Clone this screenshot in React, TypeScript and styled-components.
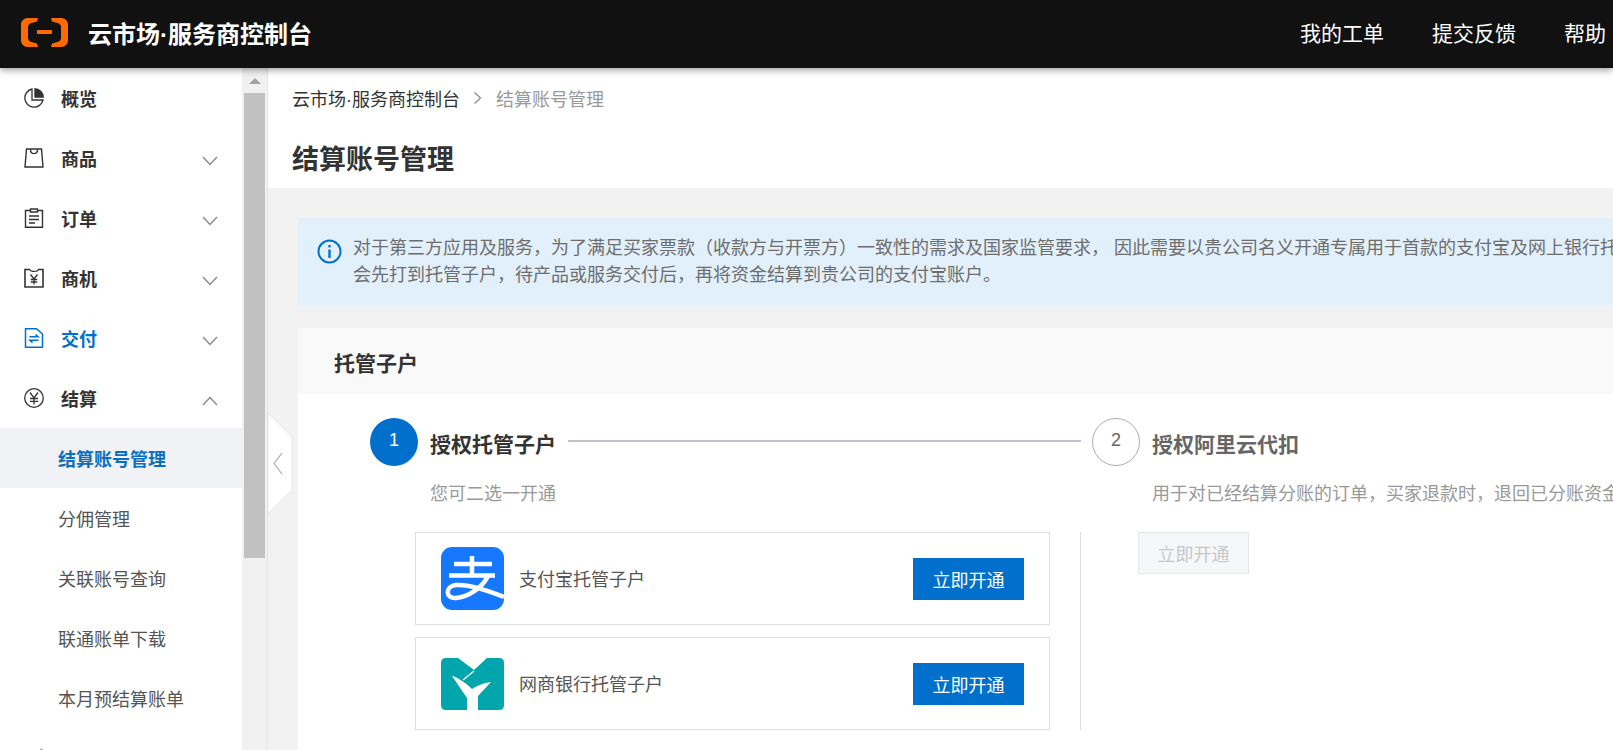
import React from "react";
import styled, { createGlobalStyle } from "styled-components";

const Global = createGlobalStyle`
  html, body { margin: 0; padding: 0; height: 100%; overflow: hidden; background: #fff; }
  * { box-sizing: border-box; }
  body { font-family: "Liberation Sans", "Noto Sans CJK SC", sans-serif; color: #333; }
`;

const Page = styled.div`
  display: flex;
  flex-direction: column;
  width: 100%;
  height: 100vh;
  overflow: hidden;
`;

const TopBar = styled.header`
  position: relative;
  z-index: 2;
  flex: none;
  display: flex;
  align-items: center;
  height: 68px;
  padding: 0 7px 4px 21px;
  background: #111;
  box-shadow: 0 2px 7px rgba(0, 0, 0, 0.4);
  color: #fff;
`;

const BrandName = styled.div`
  margin-left: 20px;
  font-size: 24px;
  font-weight: 700;
  white-space: nowrap;
`;

const TopNav = styled.nav`
  margin-left: auto;
  display: flex;
  gap: 48px;
`;

const TopLink = styled.a`
  font-size: 21px;
  color: #fff;
  white-space: nowrap;
`;

const Body = styled.div`
  position: relative;
  flex: 1;
  display: flex;
  min-height: 0;
`;

const Sidebar = styled.aside`
  flex: none;
  width: 242px;
  height: 100%;
  overflow: hidden;
  background: #fff;
`;

const MenuRow = styled.div<{ $active?: boolean }>`
  display: flex;
  align-items: center;
  height: 60px;
  padding: 0 24px;
  font-size: 18px;
  font-weight: 700;
  color: ${(p) => (p.$active ? "#0070cc" : "#333")};
`;

const MenuIconBox = styled.span`
  flex: none;
  display: flex;
  align-items: center;
  justify-content: center;
  width: 20px;
  height: 20px;
  margin-right: 17px;
`;

const Chevron = styled.svg`
  flex: none;
  margin-left: auto;
  margin-top: 5px;
`;

const SubRow = styled.div<{ $active?: boolean }>`
  display: flex;
  align-items: center;
  height: 60px;
  padding: 0 0 1px 58px;
  font-size: 18px;
  font-weight: ${(p) => (p.$active ? 700 : 400)};
  color: ${(p) => (p.$active ? "#0a6fc2" : "#555")};
  background: ${(p) => (p.$active ? "#f0f2f5" : "transparent")};
`;

const ScrollTrack = styled.div`
  flex: none;
  display: flex;
  flex-direction: column;
  align-items: center;
  width: 25px;
  height: 100%;
  background: #f1f1f1;
`;

const ScrollArrow = styled.div`
  width: 0;
  height: 0;
  margin: 10px 0 9px;
  border-left: 6px solid transparent;
  border-right: 6px solid transparent;
  border-bottom: 6px solid #a3a3a3;
`;

const ScrollThumb = styled.div`
  width: 21px;
  height: 465px;
  background: #c1c1c1;
`;

const Main = styled.main`
  position: relative;
  flex: 1;
  display: flex;
  flex-direction: column;
  min-width: 0;
  height: 100%;
  overflow: hidden;
  background: #f2f2f2;
  border-left: 1px solid #e4e4e4;
`;

const CollapseHandle = styled.svg`
  position: absolute;
  left: 0;
  top: 345px;
`;

const PageHead = styled.div`
  flex: none;
  height: 120px;
  padding: 0 24px;
  background: #fff;
`;

const Crumbs = styled.div`
  display: flex;
  align-items: center;
  height: 60px;
  font-size: 18px;
  color: #333;
`;

const CrumbSep = styled.svg`
  margin: 0 14px 0 13px;
`;

const CrumbCurrent = styled.span`
  color: #999;
`;

const PageTitle = styled.h1`
  margin: 0;
  font-size: 27px;
  line-height: 64px;
  font-weight: 700;
  color: #333;
`;

const Content = styled.div`
  flex: 1;
  display: flex;
  flex-direction: column;
  min-height: 0;
  padding: 30px 0 0 30px;
`;

const Notice = styled.div`
  flex: none;
  display: flex;
  height: 87px;
  padding: 17px 0 0 18px;
  background: #e2f0fc;
`;

const NoticeIcon = styled.svg`
  flex: none;
  margin: 4px 11px 0 1px;
`;

const NoticeText = styled.div`
  font-size: 18px;
  line-height: 27px;
  color: #6e6e6e;
  white-space: nowrap;
`;

const Card = styled.section`
  flex: 1;
  margin-top: 23px;
  background: #fff;
`;

const CardHead = styled.div`
  height: 66px;
  padding: 0 36px;
  background: #f9f9f9;
  font-size: 21px;
  line-height: 71px;
  font-weight: 700;
  color: #333;
`;

const Steps = styled.div`
  display: flex;
  padding: 24px 0 0 72px;
`;

const Step = styled.div<{ $width: number }>`
  flex: none;
  width: ${(p) => p.$width}px;
`;

const StepHead = styled.div`
  display: flex;
  align-items: flex-start;
  height: 48px;
`;

const StepCircle = styled.div<{ $on?: boolean }>`
  flex: none;
  display: flex;
  align-items: center;
  justify-content: center;
  width: 48px;
  height: 48px;
  border-radius: 50%;
  padding-bottom: 3px;
  font-size: 18px;
  background: ${(p) => (p.$on ? "#0070cc" : "#fff")};
  color: ${(p) => (p.$on ? "#fff" : "#666")};
  border: ${(p) => (p.$on ? "none" : "1px solid #aaacb8")};
`;

const StepTitle = styled.div<{ $muted?: boolean }>`
  margin-left: 12px;
  font-size: 21px;
  line-height: 54px;
  font-weight: 700;
  white-space: nowrap;
  color: ${(p) => (p.$muted ? "#666" : "#333")};
`;

const StepLine = styled.div`
  flex: 1;
  height: 2px;
  margin: 22px 11px 0 12px;
  background: #bfc1cf;
`;

const StepNote = styled.div`
  margin-left: 60px;
  font-size: 18px;
  line-height: 27px;
  margin-top: 15px;
  color: #999;
  white-space: nowrap;
`;

const OptionPanel = styled.div`
  display: flex;
  flex-direction: column;
  gap: 12px;
  width: 666px;
  height: 198px;
  margin: 24px 0 0 45px;
  padding-right: 30px;
  border-right: 1px solid #ddd;
`;

const OptionBox = styled.div`
  display: flex;
  align-items: center;
  height: 93px;
  padding: 0 25px;
  border: 1px solid #ddd;
`;

const OptionName = styled.div`
  margin-left: 15px;
  padding-bottom: 2px;
  font-size: 18px;
  color: #555;
`;

const PrimaryButton = styled.button`
  margin-left: auto;
  width: 111px;
  height: 42px;
  padding: 0;
  border: none;
  background: #0070cc;
  color: #fff;
  font: inherit;
  font-size: 18px;
`;

const DisabledButton = styled.button`
  display: block;
  width: 111px;
  height: 42px;
  margin: 24px 0 0 46px;
  padding: 0;
  border: 1px solid #e5e7eb;
  background: #f6f7f9;
  color: #c8c8c8;
  font: inherit;
  font-size: 18px;
`;

const OptionLogo = styled.svg`
  flex: none;
  display: block;
`;

const AliyunLogo = () => (
  <svg width="47" height="29" viewBox="0 0 47 29">
    <path d="M17 0H6.500C3 0 0 3 0 6.500v16C0 26 3 29 6.500 29H17l-1-3.500-5.500-1.500c-2-.5-3.500-2-3.500-4V9c0-2 1.500-3.500 3.500-4L16 3.500z" fill="#ff6a00" />
    <path d="M30 0h10.500C44 0 47 3 47 6.500v16c0 3.500-3 6.500-6.500 6.500H30l1-3.500 5.500-1.500c2-.5 3.500-2 3.500-4V9c0-2-1.500-3.500-3.500-4L31 3.500z" fill="#ff6a00" />
    <rect x="16" y="12" width="15" height="4" fill="#ff6a00" />
  </svg>
);

const ink = "#333";
const PieIcon = () => (
  <svg width="20" height="20" viewBox="0 0 20 20" fill="none">
    <path d="M8 1A9.200 9.200 0 1 0 19 12H8Z" stroke={ink} strokeWidth="1.300" />
    <path d="M10.300 0A9.700 9.700 0 0 1 20 9.700H10.300Z" fill={ink} />
  </svg>
);
const BagIcon = () => (
  <svg width="20" height="20" viewBox="0 0 20 20" fill="none" stroke={ink} strokeWidth="1.400">
    <path d="M2.500 1H17.500L19 19H1Z" />
    <path d="M6.500 1.500C6.500 7 13.500 7 13.500 1.500" />
  </svg>
);
const ClipIcon = () => (
  <svg width="20" height="20" viewBox="0 0 20 20" fill="none" stroke={ink} strokeWidth="1.400">
    <path d="M6 2.500H1.500V19.300H18.500V2.500H14" />
    <path d="M6.500 1H13.500V4H6.500Z" />
    <path d="M5 8H15M5 11.500H15M5 15H11" />
  </svg>
);
const DealIcon = () => (
  <svg width="20" height="20" viewBox="0 0 20 20" fill="none" stroke={ink} strokeWidth="1.300">
    <path d="M6 1.500H1V19H19V1.500H14" strokeWidth="1.600" />
    <path d="M6 1.500C6 4 14 4 14 1.500" />
    <path d="M6.500 6.500L10 11L13.500 6.500M10 11V16.500M6.800 11.500H13.200M6.800 14H13.200" />
  </svg>
);
const DocIcon = () => (
  <svg width="20" height="20" viewBox="0 0 20 20" fill="none" stroke="#0070cc" strokeWidth="1.500">
    <path d="M1.500 0.800H12.500L18.500 6V19.200H1.500Z" />
    <path d="M5.500 8.800H14L11.500 6.500M14.500 12.300H6L8.500 14.600" strokeWidth="1.600" />
  </svg>
);
const YenIcon = () => (
  <svg width="20" height="20" viewBox="0 0 20 20" fill="none" stroke={ink} strokeWidth="1.300">
    <circle cx="10" cy="10" r="9.300" />
    <path d="M6 4.500L10 10L14 4.500M10 10V16.500M6 10.500H14M6 13.300H14" />
  </svg>
);
const StubIcon = () => (
  <svg width="20" height="20" viewBox="0 0 20 20" fill="none" stroke="#777" strokeWidth="1.300">
    <path d="M18 1L15 4" />
  </svg>
);

const Down = () => (
  <Chevron width="16" height="10" viewBox="0 0 16 10" fill="none" stroke="#8a8a8a" strokeWidth="1.400">
    <path d="M1 1L8 8.500L15 1" />
  </Chevron>
);
const Up = () => (
  <Chevron width="16" height="10" viewBox="0 0 16 10" fill="none" stroke="#8a8a8a" strokeWidth="1.400">
    <path d="M1 9L8 1.500L15 9" />
  </Chevron>
);

const AlipayLogo = () => (
  <OptionLogo width="63" height="63" viewBox="0 0 63 63">
    <rect width="63" height="63" rx="11" fill="#1677ff" />
    <g fill="none" stroke="#fff" strokeWidth="4.500">
      <path d="M13 17H51M31 9V28M8 28.500H54" />
      <path d="M47 29C41 41 27 50 15 51C4 52 4 39 15 38C27 37 46 43 63 50" />
    </g>
  </OptionLogo>
);

const MybankLogo = () => (
  <OptionLogo width="63" height="52" viewBox="0 0 63 52">
    <path d="M5 0H17L33 12L46 0H58Q63 0 63 5V47Q63 52 58 52H5Q0 52 0 47V5Q0 0 5 0Z" fill="#00a6ac" />
    <path d="M11 18C16 19 25 25 31 31C35 28 43 25 50 24L37 38V52H26V40Z" fill="#fff" />
    <path d="M22 22L33 13" stroke="#fff" strokeWidth="1.200" />
  </OptionLogo>
);

const menu: { label: string; icon: React.ReactNode; open?: boolean; active?: boolean; plain?: boolean }[] = [
  { label: "概览", icon: <PieIcon />, plain: true },
  { label: "商品", icon: <BagIcon /> },
  { label: "订单", icon: <ClipIcon /> },
  { label: "商机", icon: <DealIcon /> },
  { label: "交付", icon: <DocIcon />, active: true },
  { label: "结算", icon: <YenIcon />, open: true },
];

const subMenu = ["结算账号管理", "分佣管理", "关联账号查询", "联通账单下载", "本月预结算账单"];

export default function App() {
  return (
    <Page>
      <Global />
      <TopBar>
        <AliyunLogo />
        <BrandName>云市场·服务商控制台</BrandName>
        <TopNav>
          <TopLink>我的工单</TopLink>
          <TopLink>提交反馈</TopLink>
          <TopLink>帮助</TopLink>
        </TopNav>
      </TopBar>
      <Body>
        <Sidebar>
          {menu.map((m) => (
            <MenuRow key={m.label} $active={m.active}>
              <MenuIconBox>{m.icon}</MenuIconBox>
              {m.label}
              {!m.plain && (m.open ? <Up /> : <Down />)}
            </MenuRow>
          ))}
          {subMenu.map((s, i) => (
            <SubRow key={s} $active={i === 0}>
              {s}
            </SubRow>
          ))}
          <MenuRow>
            <MenuIconBox>
              <StubIcon />
            </MenuIconBox>
          </MenuRow>
        </Sidebar>
        <ScrollTrack>
          <ScrollArrow />
          <ScrollThumb />
        </ScrollTrack>
        <Main>
          <PageHead>
            <Crumbs>
              云市场·服务商控制台
              <CrumbSep width="9" height="14" viewBox="0 0 9 14" fill="none" stroke="#888" strokeWidth="1.200">
                <path d="M1.500 1.500L7.500 7L1.500 12.500" />
              </CrumbSep>
              <CrumbCurrent>结算账号管理</CrumbCurrent>
            </Crumbs>
            <PageTitle>结算账号管理</PageTitle>
          </PageHead>
          <Content>
            <Notice>
              <NoticeIcon width="25" height="25" viewBox="0 0 25 25" fill="none" stroke="#0070cc">
                <circle cx="12.500" cy="12.500" r="11" strokeWidth="2" />
                <path d="M12.500 10.500V19" strokeWidth="2.400" />
                <path d="M12.500 6V8.400" strokeWidth="2.400" />
              </NoticeIcon>
              <NoticeText>
                <div>对于第三方应用及服务，为了满足买家票款（收款方与开票方）一致性的需求及国家监管要求， 因此需要以贵公司名义开通专属用于首款的支付宝及网上银行托</div>
                <div>会先打到托管子户，待产品或服务交付后，再将资金结算到贵公司的支付宝账户。</div>
              </NoticeText>
            </Notice>
            <Card>
              <CardHead>托管子户</CardHead>
              <Steps>
                <Step $width={722}>
                  <StepHead>
                    <StepCircle $on>1</StepCircle>
                    <StepTitle>授权托管子户</StepTitle>
                    <StepLine />
                  </StepHead>
                  <StepNote>您可二选一开通</StepNote>
                  <OptionPanel>
                    <OptionBox>
                      <AlipayLogo />
                      <OptionName>支付宝托管子户</OptionName>
                      <PrimaryButton>立即开通</PrimaryButton>
                    </OptionBox>
                    <OptionBox>
                      <MybankLogo />
                      <OptionName>网商银行托管子户</OptionName>
                      <PrimaryButton>立即开通</PrimaryButton>
                    </OptionBox>
                  </OptionPanel>
                </Step>
                <Step $width={600}>
                  <StepHead>
                    <StepCircle>2</StepCircle>
                    <StepTitle $muted>授权阿里云代扣</StepTitle>
                  </StepHead>
                  <StepNote>用于对已经结算分账的订单，买家退款时，退回已分账资金</StepNote>
                  <DisabledButton>立即开通</DisabledButton>
                </Step>
              </Steps>
            </Card>
          </Content>
          <CollapseHandle width="26" height="104" viewBox="0 0 26 104" fill="none">
            <path d="M0 0L24 24V77L0 101Z" fill="#fff" stroke="#e6e6e6" strokeWidth="1" />
            <path d="M14 40L6 50.500L14 61" stroke="#aaa" strokeWidth="1.200" />
          </CollapseHandle>
        </Main>
      </Body>
    </Page>
  );
}
